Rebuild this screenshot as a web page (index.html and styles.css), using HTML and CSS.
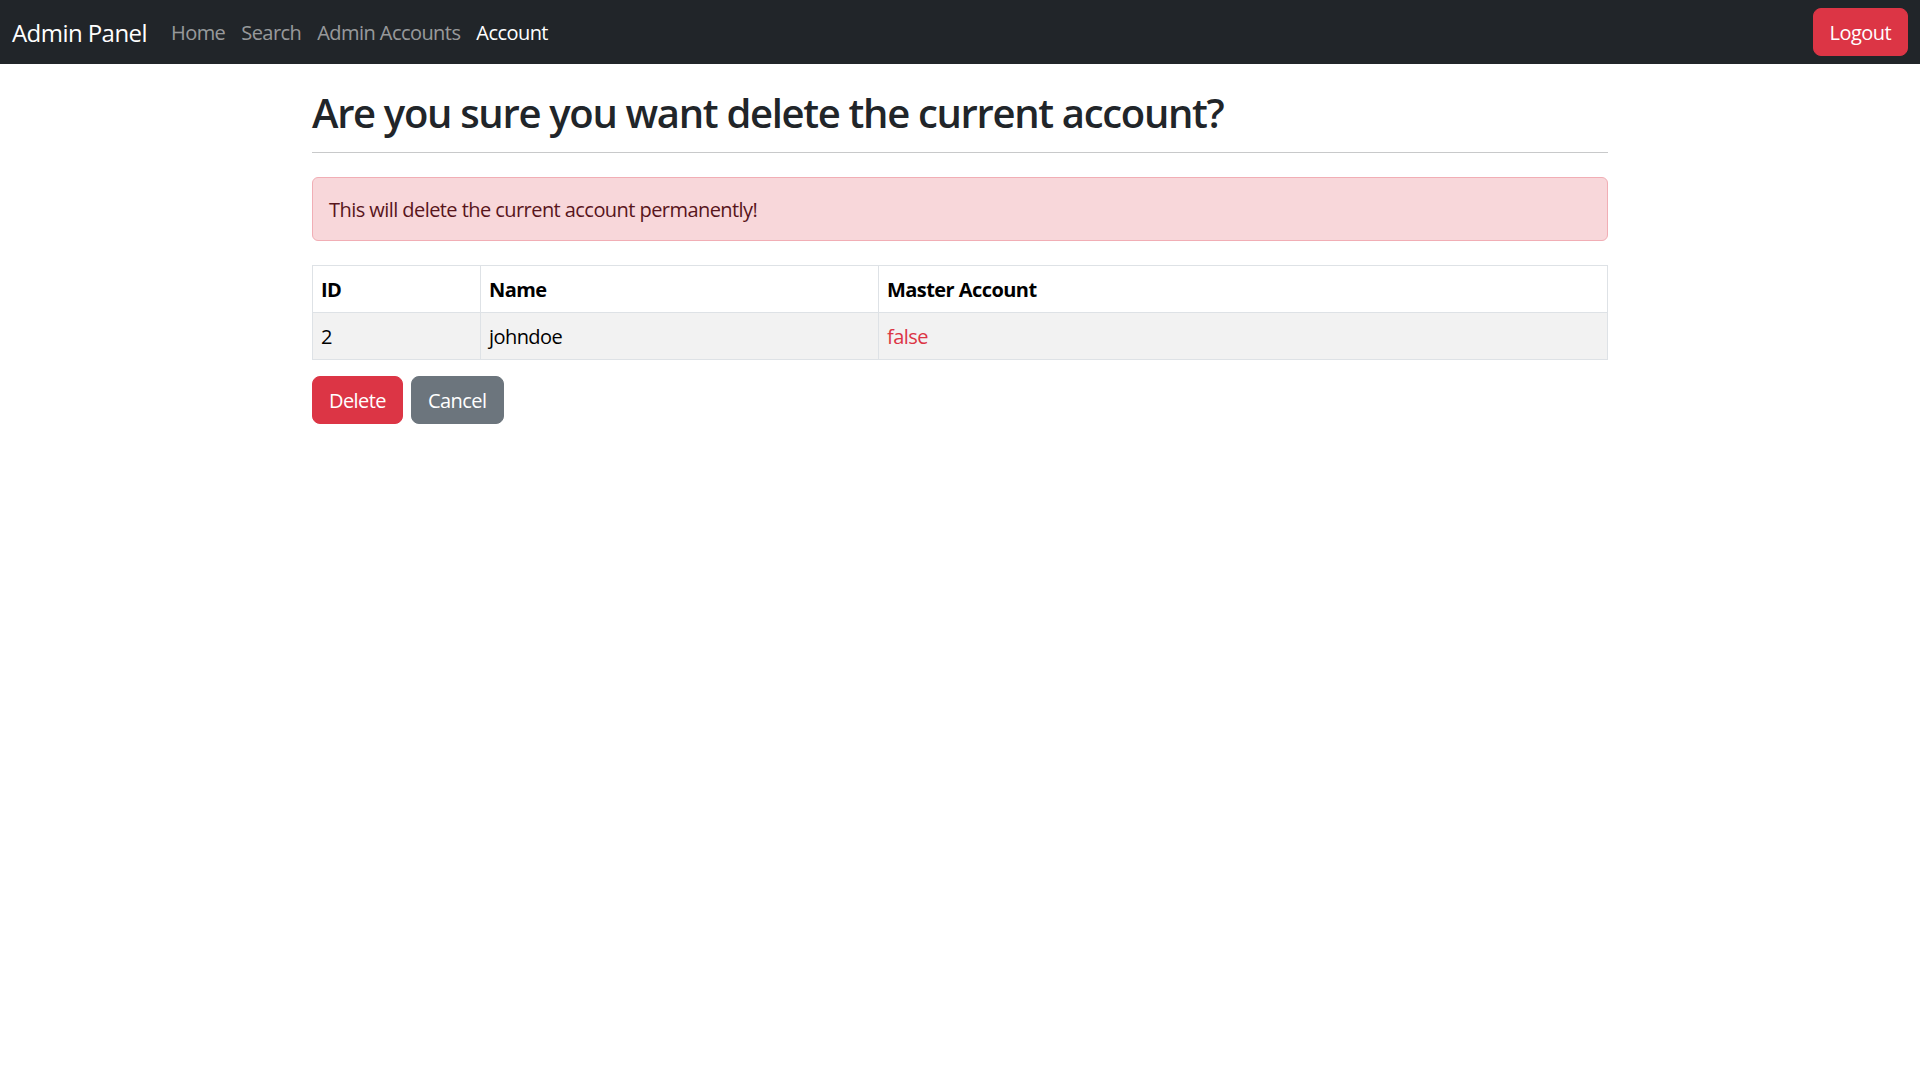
FILE: index.html
```html
<!DOCTYPE html>
<html lang="en">
<head>
<meta charset="utf-8">
<title>Admin Panel</title>
<link rel="stylesheet" href="styles.css">
</head>
<body>
<nav class="navbar">
  <div class="nav-left">
    <a class="brand" href="#">Admin Panel</a>
    <ul class="nav-links">
      <li><a class="nav-link" href="#">Home</a></li>
      <li><a class="nav-link" href="#">Search</a></li>
      <li><a class="nav-link" href="#">Admin Accounts</a></li>
      <li><a class="nav-link active" href="#">Account</a></li>
    </ul>
  </div>
  <button class="btn btn-danger">Logout</button>
</nav>
<main class="container">
  <h1 class="title">Are you sure you want delete the current account?</h1>
  <hr class="divider">
  <div class="alert">This will delete the current account permanently!</div>
  <table class="table">
    <thead>
      <tr><th class="col-id">ID</th><th class="col-name">Name</th><th>Master Account</th></tr>
    </thead>
    <tbody>
      <tr class="striped"><td>2</td><td>johndoe</td><td class="text-danger">false</td></tr>
    </tbody>
  </table>
  <div class="actions">
    <button class="btn btn-danger">Delete</button>
    <button class="btn btn-secondary">Cancel</button>
  </div>
</main>
</body>
</html>
```
FILE: styles.css
```css
* { box-sizing: border-box; }
html, body { margin: 0; padding: 0; }
body {
  font-family: "Open Sans", "Noto Sans", sans-serif;
  font-size: 20px;
  line-height: 1.5;
  letter-spacing: -0.028em;
  color: #212529;
  background: #fff;
}
.navbar {
  height: 64px;
  background: #212529;
  display: flex;
  align-items: center;
  justify-content: space-between;
  padding: 0 12px;
}
.nav-left { display: flex; align-items: center; padding-top: 2px; }
.brand {
  color: #fff;
  text-decoration: none;
  font-size: 24px;
  line-height: 1.5;
  margin-right: 16px;
}
.nav-links { list-style: none; margin: 0; padding: 0; display: flex; }
.nav-link {
  display: block;
  padding: 8px 8px;
  color: rgba(255,255,255,.55);
  text-decoration: none;
  font-size: 20px;
}
.nav-link.active { color: #fff; }
.btn {
  font-family: inherit;
  font-size: 20px;
  line-height: 1.5;
  letter-spacing: -0.028em;
  padding: 9px 16px 7px;
  border: 1px solid transparent;
  border-radius: 8px;
  color: #fff;
  cursor: pointer;
}
.btn-danger { background: #dc3545; border-color: #dc3545; }
.btn-secondary { background: #6c757d; border-color: #6c757d; }
.container {
  width: 1320px;
  margin: 0 auto;
  padding: 25px 12px 0;
}
.title {
  margin: 0;
  font-size: 40px;
  font-weight: 600;
  line-height: 1.2;
  letter-spacing: -0.033em;
  color: #212529;
}
.divider {
  margin: 15px 0 24px;
  border: 0;
  border-top: 1px solid #c8c9ca;
}
.alert {
  background: #f8d7da;
  border: 1px solid #f1aeb5;
  color: #58151c;
  border-radius: 6px;
  padding: 17px 16px 15px;
  margin-bottom: 24px;
}
.table {
  width: 100%;
  border-collapse: collapse;
  margin-bottom: 16px;
  color: #000;
}
.table th, .table td {
  border: 1px solid #dee2e6;
  padding: 9px 8px 7px;
  text-align: left;
}
.table th { font-weight: 700; }
.col-id { width: 168px; }
.col-name { width: 398px; }
.striped td { background: #f2f2f2; }
.text-danger { color: #dc3545; }
.actions { display: flex; gap: 8px; }
```
